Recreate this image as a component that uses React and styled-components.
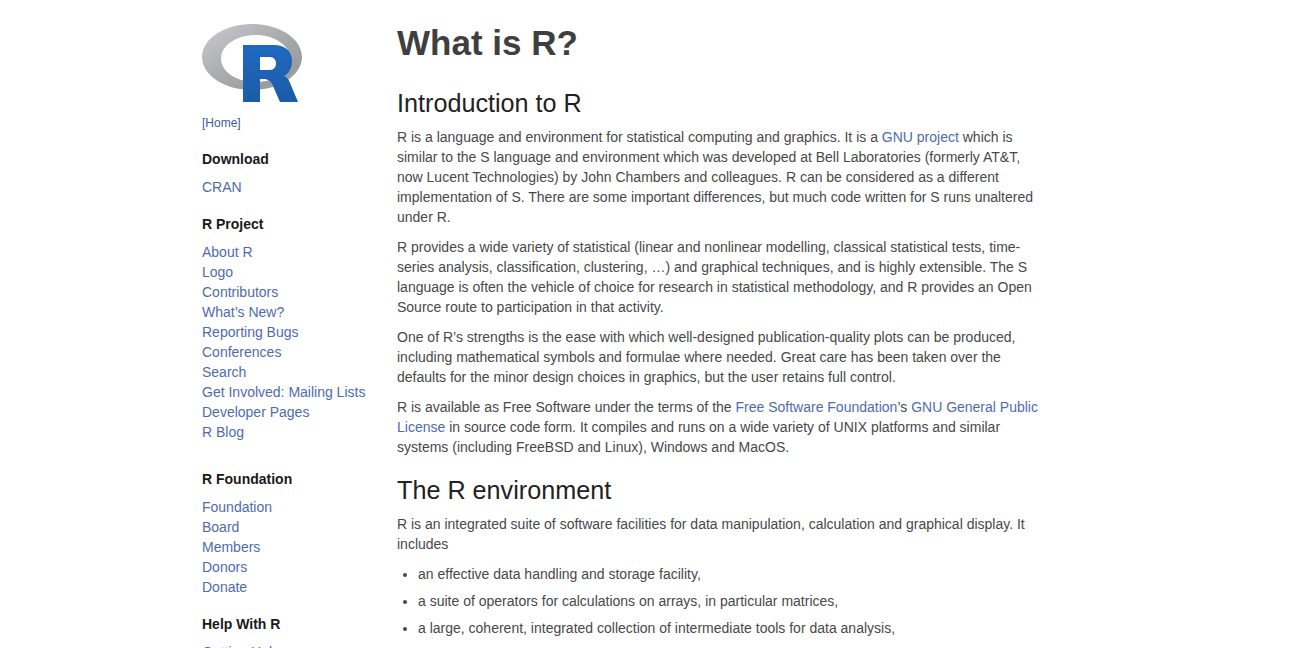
import React from "react";
import styled, { createGlobalStyle } from "styled-components";

const GlobalStyle = createGlobalStyle`
  html, body {
    margin: 0;
    height: 648px;
    overflow: hidden;
    background: #fff;
  }
  body {
    font-family: "Liberation Sans", Arial, sans-serif;
    font-size: 14px;
    line-height: 20px;
    color: #484848;
  }
  a {
    text-decoration: none;
  }
`;

const Page = styled.div`
  display: grid;
  grid-template-columns: 195px 642px;
  padding-left: 202px;
  height: 648px;
  overflow: hidden;
`;

const Sidebar = styled.nav`
  padding-top: 24px;
`;

const Logo = styled.svg`
  display: block;
  width: 100px;
  height: 78px;
`;

const Home = styled.a`
  display: block;
  margin-top: 11px;
  font-size: 12px;
  line-height: 20px;
  color: #3f5a9e;
`;

const NavHeading = styled.h2`
  margin: ${({ $gap }) => $gap || 17}px 0 8px;
  font-size: 14px;
  line-height: 20px;
  font-weight: 700;
  color: #1a1a1a;
`;

const NavLink = styled.a`
  display: block;
  color: #4f6bb0;
`;

const Main = styled.main`
  min-width: 0;
`;

const Title = styled.h1`
  margin: 20px 0 0;
  font-size: 35px;
  line-height: 46px;
  font-weight: 700;
  color: #3f3f3f;
`;

const Section = styled.h2`
  margin: ${({ $first }) => ($first ? 22 : 18)}px 0 9px;
  font-size: 25.2px;
  line-height: 30px;
  font-weight: 400;
  color: #222;
`;

const Para = styled.p`
  margin: 0 0 10px;
`;

const Link = styled.a`
  color: #4f6bb0;
`;

const List = styled.ul`
  margin: 0;
  padding-left: 21px;
`;

const Item = styled.li`
  margin-bottom: 7px;
`;

const navGroups = [
  { title: "R Project", gap: 17, links: ["About R", "Logo", "Contributors", "What’s New?", "Reporting Bugs", "Conferences", "Search", "Get Involved: Mailing Lists", "Developer Pages", "R Blog"] },
  { title: "R Foundation", gap: 27, links: ["Foundation", "Board", "Members", "Donors", "Donate"] },
  { title: "Help With R", gap: 17, links: ["Getting Help"] },
];

const App = () => (
  <>
    <GlobalStyle />
    <Page>
      <Sidebar>
        <Logo viewBox="0 0 100 78" aria-label="R logo">
          <defs>
            <linearGradient id="ring" x1="0" y1="0" x2="1" y2="1">
              <stop offset="0" stopColor="#cbcbce" />
              <stop offset="0.5" stopColor="#a9aaae" />
              <stop offset="0.8" stopColor="#9a9b9f" />
              <stop offset="1" stopColor="#b8b9bc" />
            </linearGradient>
            <linearGradient id="letter" x1="0" y1="0" x2="0" y2="1">
              <stop offset="0" stopColor="#2168c0" />
              <stop offset="1" stopColor="#1a5ca8" />
            </linearGradient>
          </defs>
          <path
            fillRule="evenodd"
            fill="url(#ring)"
            d="M50 0C22.400 0 0 14.800 0 33s22.400 33 50 33 50-14.800 50-33S77.600 0 50 0ZM53.500 11c19 0 34.500 10.500 34.500 23.500S72.500 58 53.500 58 19 47.500 19 34.500 34.500 11 53.500 11Z"
          />
          <path
            fillRule="evenodd"
            fill="url(#letter)"
            d="M41 21H72C84 21 90 28 90 37C90 45 86 50 82 52C85 53 87 56 88 59L96 78H78L71 62C69 57 66 55 62 55H58V78H41ZM58 33V46H68C72 46 74 43 74 39.500C74 36 72 33 68 33Z"
          />
        </Logo>
        <Home href="#">[Home]</Home>
        <NavHeading $gap={16}>Download</NavHeading>
        <NavLink href="#">CRAN</NavLink>
        {navGroups.map((group) => (
          <div key={group.title}>
            <NavHeading $gap={group.gap}>{group.title}</NavHeading>
            {group.links.map((label) => (
              <NavLink href="#" key={label}>{label}</NavLink>
            ))}
          </div>
        ))}
      </Sidebar>
      <Main>
        <Title>What is R?</Title>
        <Section $first>Introduction to R</Section>
        <Para>
          R is a language and environment for statistical computing and graphics. It is a <Link href="#">GNU project</Link> which is similar to the S language and environment which was developed at Bell Laboratories (formerly AT&amp;T, now Lucent Technologies) by John Chambers and colleagues. R can be considered as a different implementation of S. There are some important differences, but much code written for S runs unaltered under R.
        </Para>
        <Para>
          R provides a wide variety of statistical (linear and nonlinear modelling, classical statistical tests, time-series analysis, classification, clustering, …) and graphical techniques, and is highly extensible. The S language is often the vehicle of choice for research in statistical methodology, and R provides an Open Source route to participation in that activity.
        </Para>
        <Para>
          One of R’s strengths is the ease with which well-designed publication-quality plots can be produced, including mathematical symbols and formulae where needed. Great care has been taken over the defaults for the minor design choices in graphics, but the user retains full control.
        </Para>
        <Para>
          R is available as Free Software under the terms of the <Link href="#">Free Software Foundation</Link>’s <Link href="#">GNU General Public License</Link> in source code form. It compiles and runs on a wide variety of UNIX platforms and similar systems (including FreeBSD and Linux), Windows and MacOS.
        </Para>
        <Section>The R environment</Section>
        <Para>
          R is an integrated suite of software facilities for data manipulation, calculation and graphical display. It includes
        </Para>
        <List>
          <Item>an effective data handling and storage facility,</Item>
          <Item>a suite of operators for calculations on arrays, in particular matrices,</Item>
          <Item>a large, coherent, integrated collection of intermediate tools for data analysis,</Item>
        </List>
      </Main>
    </Page>
  </>
);

export default App;
